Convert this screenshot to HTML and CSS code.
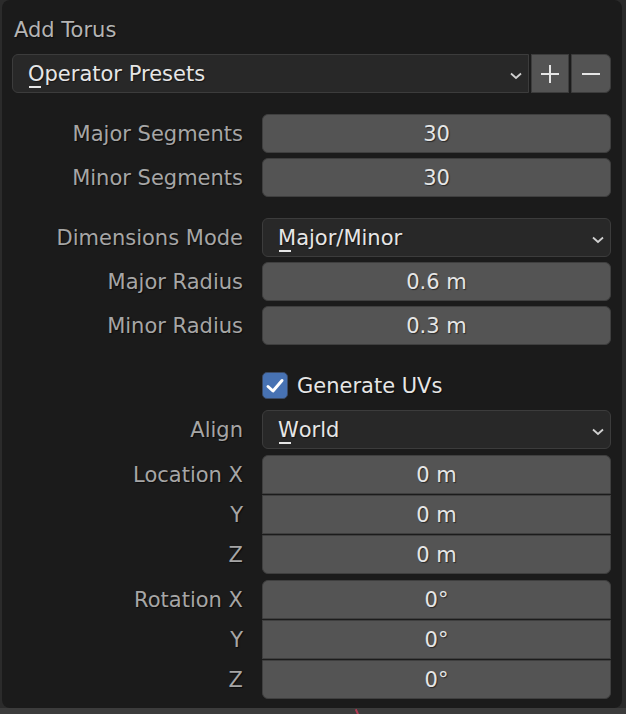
FILE: index.html
```html
<!DOCTYPE html>
<html>
<head>
<meta charset="utf-8">
<link rel="stylesheet" href="styles.css">
</head>
<body>
<div class="panel">
  <div class="title">Add Torus</div>

  <div class="presets">
    <div class="dropdown grow">
      <span class="txt"><span class="ul">O</span>perator Presets</span>
      <svg class="chev" width="12" height="8" viewBox="0 0 12 8"><path d="M1 1.5 L6 6 L11 1.5" fill="none" stroke="#d0d0d0" stroke-width="1.8"/></svg>
    </div>
    <div class="pbtn">
      <svg width="20" height="20" viewBox="0 0 20 20"><path d="M10 1 V19 M1 10 H19" stroke="#e6e6e6" stroke-width="2"/></svg>
    </div>
    <div class="pbtn last">
      <svg width="20" height="20" viewBox="0 0 20 20"><path d="M1 10 H19" stroke="#e6e6e6" stroke-width="2"/></svg>
    </div>
  </div>

  <div class="section">
    <div class="row"><div class="label">Major Segments</div><div class="field">30</div></div>
    <div class="row"><div class="label">Minor Segments</div><div class="field">30</div></div>
  </div>

  <div class="section">
    <div class="row"><div class="label">Dimensions Mode</div>
      <div class="dropdown"><span class="txt"><span class="ul">M</span>ajor/Minor</span>
        <svg class="chev" width="12" height="8" viewBox="0 0 12 8"><path d="M1 1.5 L6 6 L11 1.5" fill="none" stroke="#d0d0d0" stroke-width="1.8"/></svg>
      </div>
    </div>
    <div class="row"><div class="label">Major Radius</div><div class="field">0.6 m</div></div>
    <div class="row"><div class="label">Minor Radius</div><div class="field">0.3 m</div></div>
  </div>

  <div class="section">
    <div class="row"><div class="label"></div>
      <div class="check">
        <span class="box"><svg width="20" height="18" viewBox="0 0 20 18"><path d="M3 9.5 L8 14 L17 3.5" fill="none" stroke="#ffffff" stroke-width="3" stroke-linecap="round" stroke-linejoin="round"/></svg></span>
        <span class="ctext">Generate UVs</span>
      </div>
    </div>
    <div class="row"><div class="label">Align</div>
      <div class="dropdown"><span class="txt"><span class="ul">W</span>orld</span>
        <svg class="chev" width="12" height="8" viewBox="0 0 12 8"><path d="M1 1.5 L6 6 L11 1.5" fill="none" stroke="#d0d0d0" stroke-width="1.8"/></svg>
      </div>
    </div>
    <div class="group">
      <div class="label">Location X</div><div class="field first">0 m</div>
      <div class="label">Y</div><div class="field mid">0 m</div>
      <div class="label">Z</div><div class="field lastf">0 m</div>
    </div>
    <div class="group">
      <div class="label">Rotation X</div><div class="field first">0°</div>
      <div class="label">Y</div><div class="field mid">0°</div>
      <div class="label">Z</div><div class="field lastf">0°</div>
    </div>
  </div>
</div>
<div class="axis"></div>
</body>
</html>
```

FILE: styles.css
```css
html, body {
  margin: 0;
  padding: 0;
}
body {
  width: 626px;
  height: 714px;
  overflow: hidden;
  position: relative;
  background: linear-gradient(to bottom, #2b2b2b 0, #2b2b2b 708px, #3c3c3c 708px);
  font-family: "DejaVu Sans", sans-serif;
  font-size: 21px;
}
.panel {
  margin-left: 2px;
  width: 620px;
  height: 708px;
  box-sizing: border-box;
  background: #1b1b1b;
  border-radius: 8px;
  padding: 18px 11px 11px 10px;
  display: flex;
  flex-direction: column;
}
.title {
  height: 24px;
  line-height: 24px;
  color: #b4b4b4;
  padding-left: 2px;
  text-shadow: 1px 1px 1px rgba(0,0,0,0.6);
}
.presets {
  margin-top: 12px;
  display: flex;
  height: 39px;
  gap: 2px;
  background: #1b1b1b;
}
.grow { flex: 1; }
.dropdown {
  box-sizing: border-box;
  height: 39px;
  background: #282828;
  border: 1px solid #3c3c3c;
  border-radius: 6px;
  display: flex;
  align-items: center;
  justify-content: space-between;
  padding: 0 6px 0 15px;
  color: #e6e6e6;
  text-shadow: 1px 1px 1px rgba(0,0,0,0.5);
}
.presets .dropdown {
  border-radius: 6px 0 0 6px;
  padding-right: 6px;
}
.txt {
  line-height: 37px;
  padding-top: 2px;
  white-space: nowrap;
}
.ul {
  display: inline-block;
  background: linear-gradient(#e6e6e6, #e6e6e6) no-repeat 1px 30px / 12px 2px;
}
.chev { margin-top: 4px; }
.pbtn {
  width: 38px;
  box-sizing: border-box;
  height: 39px;
  background: #545454;
  border: 1px solid #3c3c3c;
  display: flex;
  align-items: center;
  justify-content: center;
}
.pbtn.last {
  width: 40px;
  border-radius: 0 6px 6px 0;
}
.section {
  margin-top: 21px;
  display: flex;
  flex-direction: column;
  gap: 5px;
}
.row {
  display: grid;
  grid-template-columns: 231px 349px;
  column-gap: 19px;
  height: 39px;
}
.label {
  color: #a6a6a6;
  text-align: right;
  line-height: 41px;
  white-space: nowrap;
  text-shadow: 1px 1px 1px rgba(0,0,0,0.6);
}
.field {
  box-sizing: border-box;
  height: 39px;
  background: #545454;
  border: 1px solid #3f3f3f;
  border-radius: 6px;
  color: #e6e6e6;
  text-align: center;
  line-height: 39px;
  text-shadow: 1px 1px 1px rgba(0,0,0,0.5);
}
.check {
  display: flex;
  align-items: center;
  gap: 9px;
}
.box {
  box-sizing: border-box;
  width: 26px;
  height: 27px;
  background: #4772b3;
  border: 1px solid #3a4a66;
  border-radius: 5px;
  display: flex;
  align-items: center;
  justify-content: center;
}
.ctext {
  color: #e6e6e6;
  padding-top: 1px;
  text-shadow: 1px 1px 1px rgba(0,0,0,0.5);
}
.group {
  display: grid;
  grid-template-columns: 231px 349px;
  grid-auto-rows: 39px;
  column-gap: 19px;
  row-gap: 1px;
  margin-top: 1px;
}
.group .field { border-radius: 0; }
.group .field.first { border-radius: 6px 6px 0 0; }
.group .field.lastf { border-radius: 0 0 6px 6px; }
.axis {
  position: absolute;
  left: 356px;
  top: 709px;
  width: 2px;
  height: 6px;
  background: #b23a52;
  transform: rotate(-25deg);
}
```
